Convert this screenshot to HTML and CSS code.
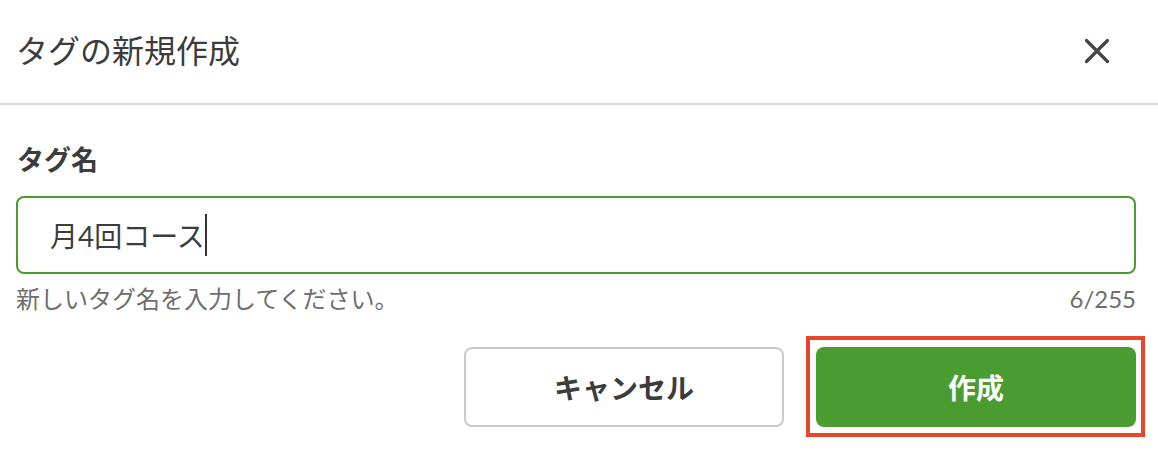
FILE: index.html
```html
<!DOCTYPE html>
<html lang="ja">
<head>
<meta charset="utf-8">
<title>タグの新規作成</title>
<link rel="stylesheet" href="styles.css">
</head>
<body>
<div class="dialog">
  <header class="dialog-header">
    <h1 class="dialog-title">タグの新規作成</h1>
    <button class="close-btn" aria-label="閉じる">
      <svg width="26" height="26" viewBox="0 0 26 26"><path d="M2.5 2.5 L23.5 23.5 M23.5 2.5 L2.5 23.5" stroke="#444" stroke-width="3.2" stroke-linecap="round" fill="none"/></svg>
    </button>
  </header>
  <div class="dialog-body">
    <label class="field-label">タグ名</label>
    <div class="text-input"><span class="input-value">月4回コース</span><span class="caret"></span></div>
    <div class="help-row">
      <span class="help-text">新しいタグ名を入力してください。</span>
      <span class="counter">6/255</span>
    </div>
    <div class="actions">
      <button class="btn btn-cancel">キャンセル</button>
      <div class="highlight">
        <button class="btn btn-primary">作成</button>
      </div>
    </div>
  </div>
</div>
</body>
</html>
```
FILE: styles.css
```css
* { box-sizing: border-box; }
html, body { margin: 0; padding: 0; background: #fff; }
body {
  font-family: Lato, "Noto Sans CJK JP", sans-serif;
  color: #3c3c3c;
}
.dialog { width: 1158px; min-height: 452px; }
.dialog-header {
  height: 105px;
  display: flex;
  align-items: center;
  justify-content: space-between;
  padding: 0 37px 2px 16px;
  border-bottom: 2px solid #d9d9d9;
}
.dialog-title {
  margin: 0;
  font-size: 32px;
  font-weight: 400;
  line-height: 1.5;
  color: #3c3c3c;
}
.close-btn {
  width: 48px;
  height: 48px;
  border: 0;
  background: none;
  padding: 0;
  display: flex;
  align-items: center;
  justify-content: center;
  cursor: pointer;
}
.dialog-body {
  padding: 34px 22px 24px 16px;
}
.field-label {
  display: block;
  font-size: 27px;
  font-weight: 700;
  line-height: 42px;
  padding-left: 1px;
  color: #3c3c3c;
}
.text-input {
  margin-top: 15px;
  height: 78px;
  border: 2px solid #4b9c2f;
  border-radius: 8px;
  padding: 0 32px;
  display: flex;
  align-items: center;
  font-size: 28px;
  color: #3c3c3c;
}
.caret {
  display: inline-block;
  width: 2px;
  height: 42px;
  background: #333;
  margin-left: 0;
}
.help-row {
  margin-top: 7px;
  display: flex;
  justify-content: space-between;
  font-size: 24px;
  line-height: 36px;
  color: #6e6e6e;
}
.help-text { padding-left: 0; }
.actions {
  margin-top: 30px;
  display: flex;
  justify-content: flex-end;
  align-items: flex-start;
  gap: 32px;
}
.btn {
  width: 320px;
  height: 80px;
  border-radius: 8px;
  font-family: Lato, "Noto Sans CJK JP", sans-serif;
  font-size: 28px;
  font-weight: 700;
  cursor: pointer;
}
.btn-cancel {
  background: #fff;
  border: 2px solid #cacacd;
  color: #3c3c3c;
}
.btn-primary {
  display: block;
  background: #4a9c30;
  border: 0;
  color: #fff;
}
.highlight {
  border: 4px solid #e8462b;
  padding: 7px 5px 6px 6px;
  margin: -11px -9px -10px -10px;
}
```
